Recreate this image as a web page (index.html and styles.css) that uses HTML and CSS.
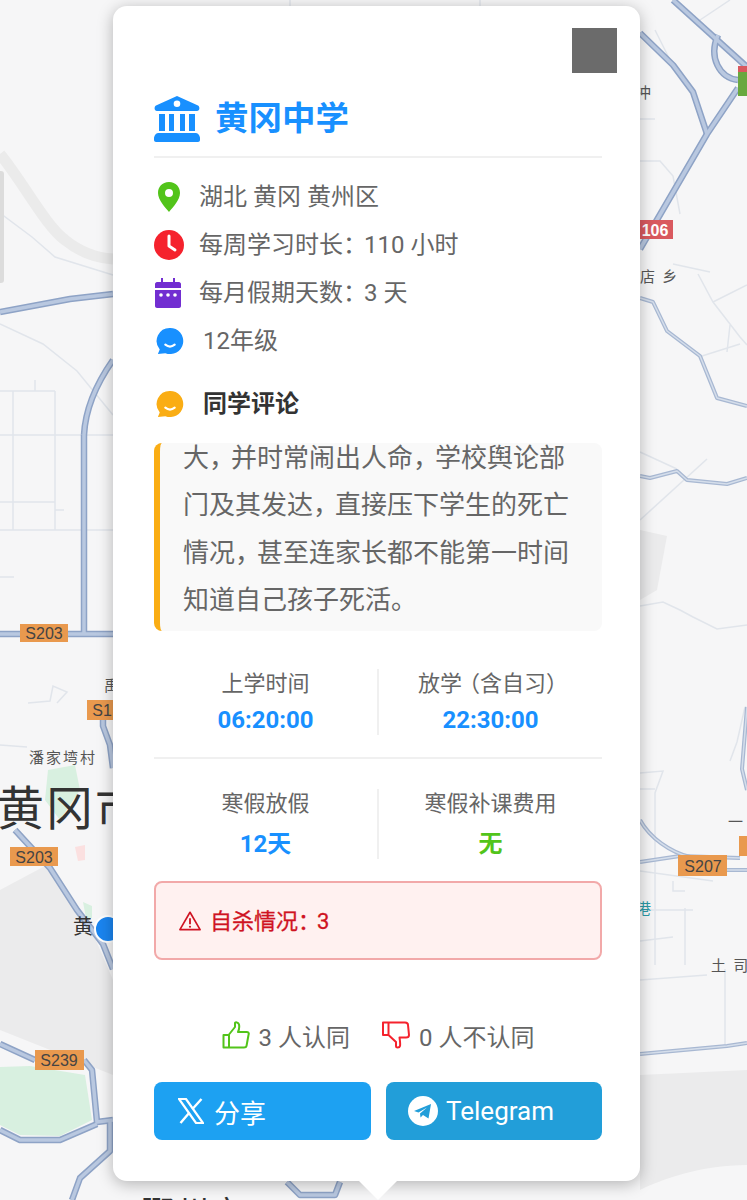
FILE: index.html
```html
<!DOCTYPE html>
<html lang="zh-CN">
<head>
    <meta charset="UTF-8">
    <meta name="viewport" content="width=device-width, initial-scale=1.0">
    <title>黄冈中学</title>
    <link rel="stylesheet" href="styles.css">
</head>
<body>
    <!-- 底图 -->
    <svg class="map" viewBox="0 0 747 1200" width="747" height="1200">
        <defs>
            <g id="mainRoads">
                <path d="M0 312 L70 299 L113 294" />
                <path d="M84 435 C85 415 92 390 113 360" />
                <path d="M84 435 V634" />
                <path d="M0 634 H113" />
                <path d="M103 700 V726 L110 745 L113 768" />
                <path d="M15 830 L50 868 L77 910 L103 944 L113 969" />
                <path d="M0 1044 L35 1060 M84 1060 L92 1070 L97 1122 L113 1120" />
                <path d="M0 1130 L20 1140 L60 1140 L97 1124" />
                <path d="M110 1120 V1151 L80 1178 L72 1200" />
                <path d="M287 1182 L300 1195 L335 1195 L340 1182" />
                <path d="M640 33 L673 65 L693 92 L707 134" />
                <path d="M640 249 L707 134 L738 88" />
                <path d="M673 0 L747 67" />
                <path d="M718 35 C708 58 720 78 738 80" />
            </g>
            <g id="sideRoads">
                <path d="M640 298 L653 302 L667 331 L700 356 L717 398 L747 406" />
                <path d="M640 476 L650 478 L677 471 L687 480 L727 484 L747 478" />
                <path d="M640 862 L680 856 L740 858" />
                <path d="M727 870 H747" />
                <path d="M640 820 C650 838 670 852 690 857" />
                <path d="M747 707 L742 769 L747 790" />
                <path d="M640 1054 L727 1046 L747 1043" />
            </g>
        </defs>
        <path class="water" d="M0 890 L45 866 L85 915 L113 980 V1075 L0 1030Z" />
        <path class="water" d="M640 1075 L747 1070 V1165 C700 1165 660 1180 640 1190Z" />
        <path class="water" d="M640 530 L667 536 L657 590 L640 600Z" />
        <path class="water-line" d="M0 154 C25 185 45 225 65 240 C80 252 95 258 113 259" />
        <path class="park" d="M0 1067 L30 1066 L85 1075 L92 1120 L60 1136 L20 1135 L0 1125Z" />
        <path class="park" d="M48 770 L75 765 L80 790 L60 820 L45 800Z" />
        <path class="park" d="M83 902 L92 906 L92 918 L86 918Z" />
        <path class="park pink" d="M75 847 L85 845 L85 860 L78 861Z" />
        <g class="thin">
            <path d="M0 213 L32 237 L55 257 L113 275" />
            <path d="M0 324 L43 344 L77 371 L113 415" />
            <path d="M0 391 H55 M35 380 V391 M13 391 V530 M55 391 V530 M0 435 H113 M0 502 H55 M0 530 H113 M0 577 H14 M55 510 H64" />
            <path d="M28 703 L50 701 L53 686 L67 692 L57 703" />
            <path d="M0 745 L27 747" />
            <path d="M290 0 V6 M480 0 V6" />
            <path d="M640 161 H660 L673 176 L680 214" />
            <path d="M640 119 H655" />
            <path d="M655 30 L670 60 M700 20 L730 0" />
            <path d="M673 264 L710 272 M698 274 L713 302 L740 337 L747 345 M713 302 L747 285 M702 356 L740 344 M727 352 L730 325" />
            <path d="M640 452 L677 469" />
            <path d="M640 520 L707 459" />
            <path d="M640 606 L663 602 L680 610 L693 617 L717 629 L747 625" />
            <path d="M730 761 L737 742 L745 707" />
            <path d="M640 773 L663 771 L655 793 V965 M640 789 H655" />
            <path d="M640 871 L713 881 M640 910 H693 M685 908 V965 M640 941 L673 937 M673 881 V891 H685" />
            <path d="M640 980 L707 975 M725 969 V1045" />
        </g>
        <use href="#mainRoads" class="road-edge" />
        <use href="#mainRoads" class="road-core" />
        <use href="#sideRoads" class="side-edge" />
        <use href="#sideRoads" class="side-core" />
        <g class="shields">
            <rect x="20" y="624" width="48" height="18" />
            <rect x="87" y="700" width="30" height="20" />
            <rect x="10" y="847" width="48" height="19" />
            <rect x="35" y="1050" width="49" height="20" />
            <rect x="678" y="855" width="49" height="21" />
            <rect x="739" y="836" width="12" height="20" />
            <rect class="red" x="630" y="220" width="43" height="19" />
            <rect class="green" x="738" y="70" width="12" height="26" />
            <rect class="red" x="738" y="66" width="12" height="6" />
        </g>
        <g class="shield-text">
            <text x="44" y="639">S203</text>
            <text x="102" y="716">S1</text>
            <text x="34" y="863">S203</text>
            <text x="59" y="1066">S239</text>
            <text x="703" y="872">S207</text>
            <text class="white" x="655" y="236">106</text>
        </g>
        <circle class="dot" cx="108" cy="929" r="13" />
        <g class="labels">
            <text x="636" y="98">冲</text>
            <text x="640" y="282">店 乡</text>
            <text x="29" y="763">潘家塆村</text>
            <text x="711" y="971">土 司</text>
            <text x="728" y="827">一</text>
            <text class="teal" x="636" y="914">港</text>
            <text x="104" y="691">禹</text>
            <text class="mid" x="73" y="934">黄</text>
            <text class="city" x="-3" y="825">黄冈市</text>
            <text class="city-low" x="141" y="1225">鄂州市</text>
        </g>
    </svg>
    <div class="side-tab"></div>

    <div class="popup">
        <div class="close-box"></div>

        <div class="title">
            <svg class="title-icon" viewBox="0 0 46 46">
                <path d="M23 0 L44 9.500 C46 10.500 46 15 43 15 H3 C0 15 0 10.500 2 9.500Z M23 4.500 A3.300 3.300 0 1 0 23 11.100 A3.300 3.300 0 0 0 23 4.500Z" fill-rule="evenodd" />
                <path d="M5 18 H11 V35 H5Z M15 18 H20 V35 H15Z M26 18 H31 V35 H26Z M35 18 H41 V35 H35Z" />
                <path d="M4 37 H42 C44 37 46 40 46 42 V44 C46 45 45 46 44 46 H2 C1 46 0 45 0 44 V42 C0 40 2 37 4 37Z" />
            </svg>
            <span>黄冈中学</span>
        </div>

        <div class="info-list">
            <div class="info-row">
                <span class="info-icon">
                    <svg width="24" height="32" viewBox="0 0 24 32"><path fill="#52c41a" fill-rule="evenodd" d="M12 1 C5 1 1 6 1 12 C1 19 8 26 12 31 C16 26 23 19 23 12 C23 6 19 1 12 1Z M12 8 A4 4 0 1 1 12 16 A4 4 0 0 1 12 8Z" /></svg>
                </span>
                <span>湖北 黄冈 黄州区</span>
            </div>
            <div class="info-row">
                <span class="info-icon">
                    <svg width="30" height="30" viewBox="0 0 30 30"><circle cx="15" cy="15" r="15" fill="#f5222d" /><path d="M15 6 V16 L21 20" fill="none" stroke="#fff" stroke-width="3" stroke-linecap="round" stroke-linejoin="round" /></svg>
                </span>
                <span>每周学习时长<span class="colon">：</span>110 小时</span>
            </div>
            <div class="info-row">
                <span class="info-icon">
                    <svg class="cal" width="26" height="30" viewBox="0 0 26 30"><path fill="#722ed1" d="M6 0 H8 V4 H18 V0 H20 V4 H24 C25 4 26 5 26 6 V10 H0 V6 C0 5 1 4 2 4 H6Z M0 12 H26 V28 C26 29 25 30 24 30 H2 C1 30 0 29 0 28Z" /><circle cx="6" cy="17" r="1.800" fill="#fff" /><circle cx="13" cy="17" r="1.800" fill="#fff" /><circle cx="20" cy="17" r="1.800" fill="#fff" /></svg>
                </span>
                <span>每月假期天数<span class="colon">：</span>3 天</span>
            </div>
            <div class="info-row grade">
                <span class="info-icon">
                    <svg class="chat" width="30" height="30" viewBox="0 0 30 30"><path fill="#1890ff" d="M15 1 A14 14 0 1 1 10 28 L2 29 L4 24 A14 14 0 0 1 15 1Z" /><path d="M10 19 Q15 23 20 19" fill="none" stroke="#fff" stroke-width="2.400" stroke-linecap="round" /></svg>
                </span>
                <span>12年级</span>
            </div>
        </div>

        <div class="comment-head">
            <span class="info-icon">
                <svg class="chat" width="30" height="30" viewBox="0 0 30 30"><path fill="#faad14" d="M15 1 A14 14 0 1 1 10 28 L2 29 L4 24 A14 14 0 0 1 15 1Z" /><path d="M10 19 Q15 23 20 19" fill="none" stroke="#fff" stroke-width="2.400" stroke-linecap="round" /></svg>
            </span>
            <strong>同学评论</strong>
        </div>

        <div class="comment-box">
            <div class="comment-scroll">
                大<span class="comma">，</span>并时常闹出人命<span class="comma">，</span>学校舆论部<br>
                门及其发达<span class="comma">，</span>直接压下学生的死亡<br>
                情况<span class="comma">，</span>甚至连家长都不能第一时间<br>
                知道自己孩子死活。
            </div>
        </div>

        <div class="stats first">
            <div class="stat">
                <div class="stat-label">上学时间</div>
                <div class="stat-value">06:20:00</div>
            </div>
            <div class="stat">
                <div class="stat-label">放学<span class="paren-l">（</span>含自习<span class="paren-r">）</span></div>
                <div class="stat-value">22:30:00</div>
            </div>
        </div>
        <div class="stats second">
            <div class="stat">
                <div class="stat-label">寒假放假</div>
                <div class="stat-value">12天</div>
            </div>
            <div class="stat">
                <div class="stat-label">寒假补课费用</div>
                <div class="stat-value green">无</div>
            </div>
        </div>

        <div class="alert">
            <svg width="22" height="21" viewBox="0 0 24 22"><path d="M12 2 L23 21 H1Z" fill="none" stroke="#cf1322" stroke-width="1.800" stroke-linejoin="round" /><path d="M12 8.500 V15" stroke="#cf1322" stroke-width="2" /><circle cx="12" cy="17.800" r="1.200" fill="#cf1322" /></svg>
            <span class="alert-text">自杀情况<span class="colon">：</span>3</span>
        </div>

        <div class="votes">
            <div class="vote">
                <svg width="28" height="28" viewBox="0 0 28 28"><path d="M1.500 14 H7 V26.500 H1.500Z M7 13.500 L13 6 V2 C13 1 16.500 1 17 3.500 C17.500 6 16.500 10 16 11 H25 C27 11 27 13 26.500 14 L24.500 25 C24.200 26.500 23 26.500 22 26.500 H7" fill="none" stroke="#52c41a" stroke-width="2" stroke-linejoin="round" /></svg>
                <span>3 人认同</span>
            </div>
            <div class="vote">
                <svg width="28" height="28" viewBox="0 0 28 28"><path d="M1 1.500 H6.500 V14 H1Z M6.500 1.500 H23 C25 1.500 26 2.500 26 4 L27 14 C27 16 26 16.500 24 16.500 H17.500 C18 20 18.500 23 18 25 C17.500 27 14 27 14 25 V21 L7 14.500" fill="none" stroke="#f5222d" stroke-width="2" stroke-linejoin="round" /></svg>
                <span>0 人不认同</span>
            </div>
        </div>

        <div class="share">
            <button class="share-btn x-btn">
                <svg width="26" height="26" viewBox="0 0 26 26"><path d="M1 1 H8 L25 25 H18Z" fill="none" stroke="#fff" stroke-width="2.200" /><path d="M23.500 1 L14.500 11 M11.500 14.500 L2.500 25" stroke="#fff" stroke-width="2.400" /></svg>
                <span>分享</span>
            </button>
            <button class="share-btn tg-btn">
                <svg width="30" height="30" viewBox="0 0 30 30"><circle cx="15" cy="15" r="15" fill="#fff" /><path fill="#229ed9" d="M6 15 L23 8 L20.500 22.500 L15 19 L12.500 21.500 L12 17.500 L19 11.500 L10.500 16.500Z" /></svg>
                <span>Telegram</span>
            </button>
        </div>

        <div class="tip"></div>
    </div>
</body>
</html>
```

FILE: styles.css
```css
* {
    margin: 0;
    padding: 0;
    box-sizing: border-box;
}

html, body {
    height: 1200px;
    overflow: hidden;
}

body {
    font-family: Roboto, 'Noto Sans CJK SC', sans-serif;
    background: #f6f6f7;
    color: #666;
    padding: 6px 0 0 113px;
}

/* 底图 */
.map {
    position: absolute;
    top: 0;
    left: 0;
}

.map .water { fill: #ebebec; }
.map .water-line { fill: none; stroke: #ebebeb; stroke-width: 11; }
.map .park { fill: #d8f0e0; }
.map .park.pink { fill: #fbe0e0; }

.map .thin path {
    fill: none;
    stroke: #e1e5eb;
    stroke-width: 1.500;
}

.map use {
    fill: none;
    stroke-linejoin: round;
}

.map .road-edge { stroke: #8ea3c6; stroke-width: 6.500; }
.map .road-core { stroke: #b9c8e0; stroke-width: 3.500; }
.map .side-edge { stroke: #a8b8d2; stroke-width: 4; }
.map .side-core { stroke: #d5deeb; stroke-width: 1.500; }

.map .shields rect { fill: #e9994e; }
.map .shields .red { fill: #d9595f; }
.map .shields .green { fill: #69a83f; }

.map .shield-text text {
    font-family: 'Liberation Sans', sans-serif;
    font-size: 16px;
    fill: #444;
    text-anchor: middle;
}

.map .shield-text .white {
    fill: #fff;
    font-weight: bold;
}

.map .dot {
    fill: #1a85f0;
    stroke: #fff;
    stroke-width: 2;
}

.map .labels text {
    font-family: 'Noto Sans CJK SC', sans-serif;
    font-size: 15px;
    fill: #555;
    letter-spacing: 2px;
}

.map .labels .mid { font-size: 20px; fill: #333; }
.map .labels .city { font-size: 47px; fill: #333; }
.map .labels .city-low { font-size: 33px; fill: #333; }
.map .labels .teal { fill: #2b9aa6; }

.side-tab {
    position: absolute;
    top: 171px;
    left: 0;
    width: 4px;
    height: 112px;
    background: #dcdcdc;
    border-radius: 0 3px 3px 0;
}

/* 弹窗 */
.popup {
    position: relative;
    width: 527px;
    height: 1175px;
    background: #fff;
    border-radius: 14px;
    box-shadow: 0 3px 16px rgba(0, 0, 0, 0.28);
    padding: 22px 38px 0 41px;
}

.close-box {
    width: 45px;
    height: 45px;
    background: #6b6b6b;
    margin-left: auto;
    margin-right: -15px;
}

.title {
    display: flex;
    align-items: center;
    gap: 15px;
    margin-top: 23px;
    padding-bottom: 14px;
    border-bottom: 2px solid #f0f0f0;
    color: #1890ff;
    font-size: 33.500px;
    font-weight: 700;
    line-height: 46px;
}

.title-icon {
    width: 46px;
    height: 46px;
    fill: #1890ff;
    flex-shrink: 0;
}

.info-list {
    margin-top: 15px;
}

.info-row {
    display: flex;
    align-items: center;
    height: 48px;
    font-size: 24px;
    line-height: 34px;
}

.info-icon {
    width: 30px;
    height: 32px;
    margin-right: 15px;
    display: flex;
    align-items: center;
    justify-content: center;
    flex-shrink: 0;
}

.chat {
    margin-left: 2px;
}

.cal {
    margin-left: -2px;
}

.grade .info-icon {
    margin-right: 19px;
}

.colon {
    letter-spacing: -3px;
}

.comment-head {
    display: flex;
    align-items: center;
    height: 48px;
    margin-top: 15px;
    font-size: 24px;
    line-height: 34px;
}

.comment-head .info-icon {
    margin-right: 19px;
}

.comment-head strong {
    color: #333;
}

.comment-box {
    height: 188px;
    margin-top: 15px;
    background: #f9f9f9;
    border-left: 6px solid #faad14;
    border-radius: 8px;
    overflow: hidden;
    padding-left: 23px;
}

.comment-scroll {
    margin-top: -8px;
    font-size: 26px;
    line-height: 47.300px;
    color: #666;
    white-space: nowrap;
}

.comma {
    letter-spacing: -4px;
}

.paren-l {
    margin-left: -4px;
}

.paren-r {
    margin-right: -5px;
}

.stats {
    display: grid;
    grid-template-columns: 225px 223px;
    text-align: center;
}

.stats.first {
    margin-top: 38px;
    padding-bottom: 22px;
    border-bottom: 2px solid #f0f0f0;
}

.stats.second {
    margin-top: 30px;
}

.stat {
    height: 66px;
}

.stat:first-child {
    border-right: 2px solid #f0f0f0;
}

.stats.second .stat {
    height: 70px;
}

.stats.second .stat-value {
    margin-top: 8px;
}

.stat-label {
    font-size: 22px;
    line-height: 30px;
}

.stat-value {
    margin-top: 4px;
    font-size: 24px;
    font-weight: 700;
    line-height: 34px;
    color: #1890ff;
}

.stat-value.green {
    color: #52c41a;
}

.alert {
    display: flex;
    align-items: center;
    gap: 9px;
    height: 79px;
    margin-top: 22px;
    padding-left: 23px;
    background: #fff1f0;
    border: 2px solid #f2a9a9;
    border-radius: 8px;
    color: #cf1322;
    font-size: 22px;
}

.alert-text {
    padding-bottom: 4px;
    -webkit-text-stroke: 0.3px #cf1322;
}

.votes {
    display: flex;
    justify-content: center;
    gap: 32px;
    margin-top: 60px;
    font-size: 24px;
}

.vote {
    display: flex;
    align-items: center;
    gap: 9px;
    height: 30px;
}

.share {
    display: grid;
    grid-template-columns: 217px 216px;
    gap: 15px;
    margin-top: 32px;
}

.share-btn {
    display: flex;
    align-items: center;
    height: 58px;
    border: none;
    border-radius: 8px;
    color: #fff;
    font-family: inherit;
    font-size: 26px;
    text-align: left;
}

.x-btn {
    gap: 10px;
    padding-left: 24px;
    background: #1da1f2;
}

.tg-btn {
    gap: 8px;
    padding-left: 22px;
    background: #229ed9;
}

.tip {
    position: absolute;
    left: 245px;
    bottom: -19px;
    width: 0;
    height: 0;
    border-left: 20px solid transparent;
    border-right: 20px solid transparent;
    border-top: 20px solid #fff;
}
```
